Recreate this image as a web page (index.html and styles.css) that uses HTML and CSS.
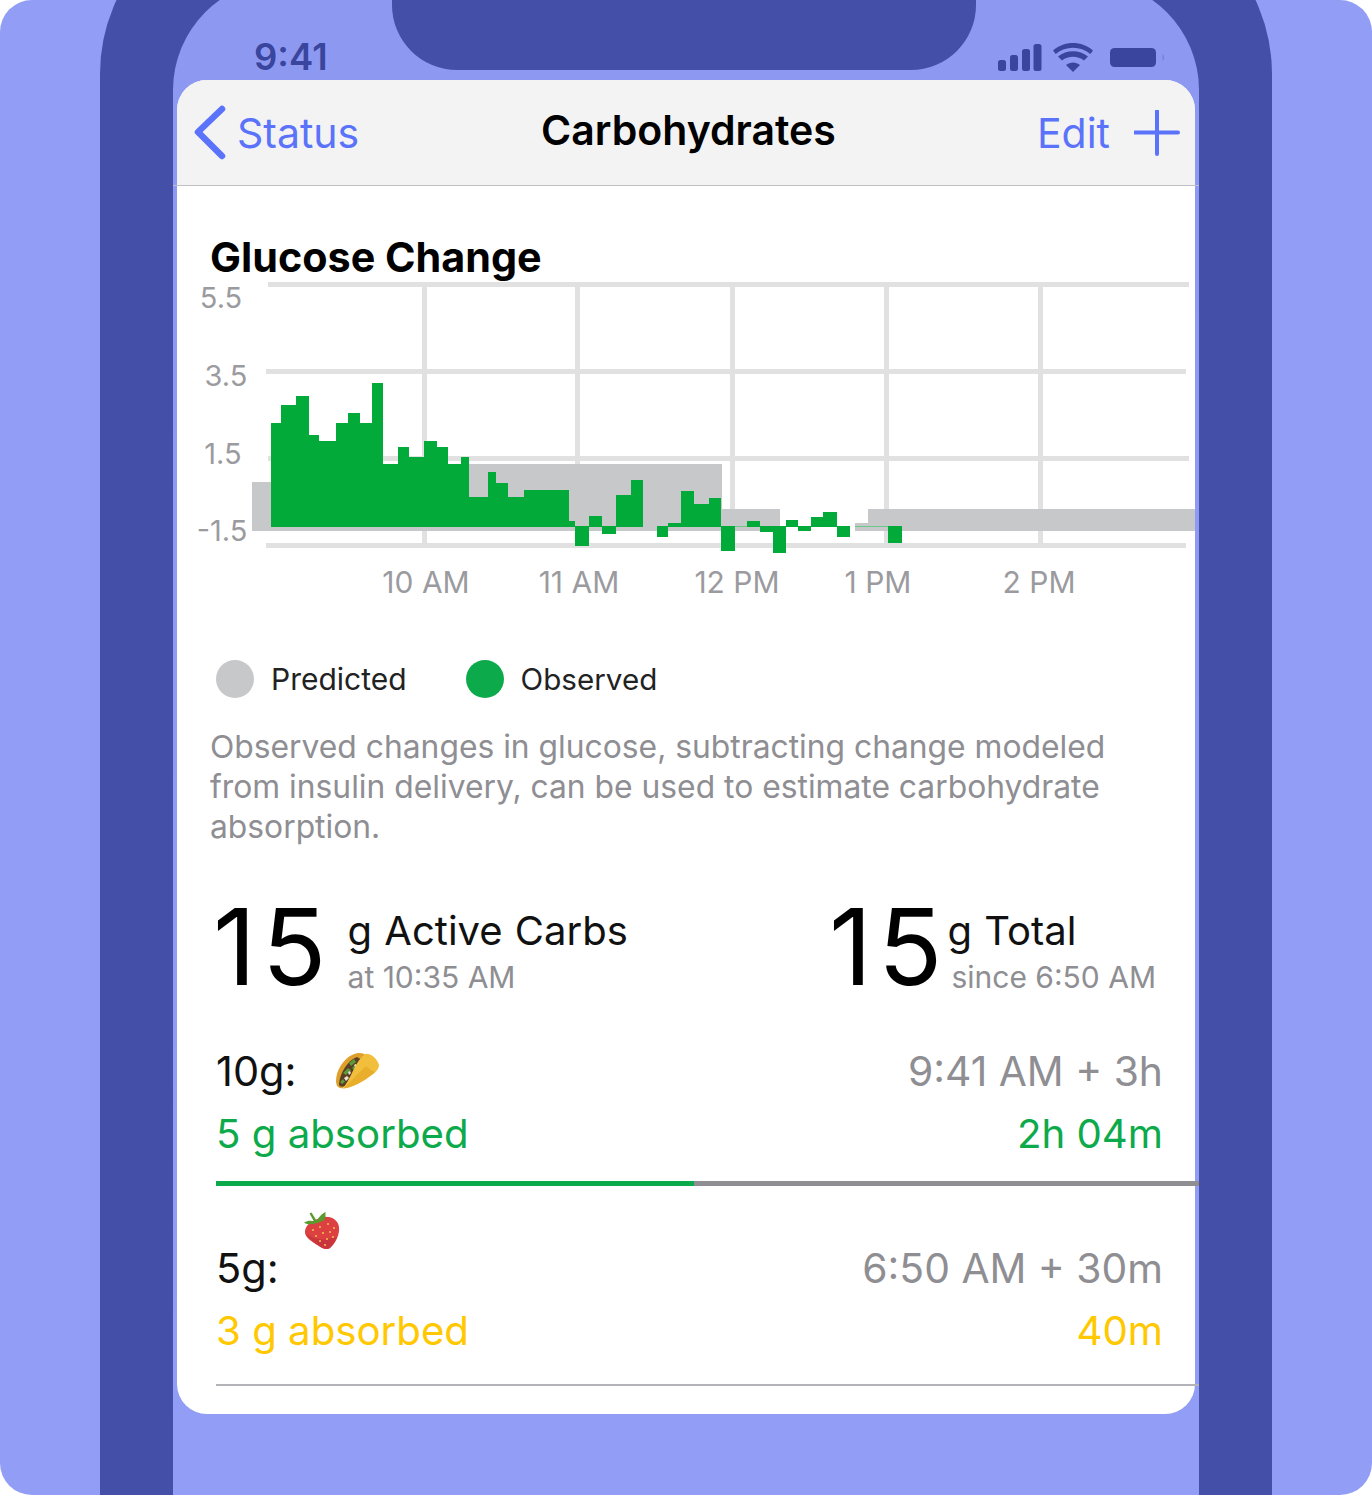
FILE: index.html
```html
<!DOCTYPE html>
<html lang="en">
<head>
<meta charset="utf-8">
<title>Carbohydrates</title>
<link rel="stylesheet" href="styles.css">
</head>
<body>
<div class="backdrop">
  <div class="frame">
    <div class="screen">
      <div class="statusbar">
        <span class="time">9:41</span>
        <div class="notch"></div>
        <div class="status-icons">
          <svg class="ic-signal" width="44" height="28" viewBox="0 0 44 28"><rect x="0" y="16" width="8" height="11" rx="2.5"/><rect x="12" y="11" width="8" height="16" rx="2.5"/><rect x="24" y="5" width="8" height="22" rx="2.5"/><rect x="35.500" y="0" width="8" height="27" rx="2.500"/></svg>
          <svg class="ic-wifi" width="40" height="30" viewBox="0 0 40 30"><path d="M20 29l-7-7c4-3.500 10-3.500 14 0z"/><path d="M9 17.500l-4-4c8.500-7 21.500-7 30 0l-4 4c-6.500-5-15.500-5-22 0z"/><path d="M2.700 11L0 7.500C11-2.500 29-2.500 40 7.500L37.300 11C27.500 2.500 12.500 2.500 2.700 11z"/></svg>
          <svg class="ic-battery" width="58" height="20" viewBox="0 0 58 20"><rect x="0" y="0" width="46" height="19" rx="4.500"/><path class="nub" d="M52.500 6c2 .8 2 6.200 0 7z"/></svg>
        </div>
      </div>
      <main class="card">
        <header class="nav">
          <a class="back">
            <svg width="34" height="56" viewBox="0 0 34 56"><path d="M29 4L5 27l24 24" fill="none" stroke="#5B73FA" stroke-width="6.500" stroke-linecap="round" stroke-linejoin="round"/></svg>
            <span>Status</span>
          </a>
          <h1 class="nav-title">Carbohydrates</h1>
          <div class="nav-actions">
            <span>Edit</span>
            <svg width="46" height="46" viewBox="0 0 46 46"><path d="M23 1v43M1 22.500h43" fill="none" stroke="#5B73FA" stroke-width="4" stroke-linecap="round"/></svg>
          </div>
        </header>
        <div class="nav-line"></div>

        <h2 class="chart-title">Glucose Change</h2>
        <svg class="chart" width="1018" height="330" viewBox="177 282 1018 330">
          <g class="grid">
            <rect x="268" y="282" width="921" height="5"/>
            <rect x="266" y="369" width="920" height="5"/>
            <rect x="268" y="456" width="921" height="5"/>
            <rect x="266" y="543" width="920" height="5"/>
            <rect x="422" y="284" width="5" height="261"/>
            <rect x="575" y="284" width="5" height="261"/>
            <rect x="730" y="284" width="5" height="261"/>
            <rect x="884" y="284" width="5" height="261"/>
            <rect x="1038" y="284" width="5" height="261"/>
          </g>
          <g class="predicted">
            <rect x="252" y="482" width="20" height="49"/>
            <rect x="271" y="520" width="200" height="11"/>
            <rect x="469" y="464" width="253" height="67"/>
            <rect x="722" y="509" width="58" height="22"/>
            <rect x="855" y="523" width="13" height="8"/>
            <rect x="868" y="509" width="327" height="22"/>
          </g>
          <path class="observed" d="M271 527V423H281V405H296V396H309V435H319V441H336V423H348V413H360V423H372V383H383V464H398V447H409V457H424V441H437V447H448V464H461V457H469V497H488V472H496V483H508V497H524V490H569V521H575V527H589V516H602V527H616V495H631V480H643V527H668V523H681V491H694V504H709V498H721V527Z"/>
          <g class="observed">
            <rect x="575" y="526" width="14" height="20"/>
            <rect x="602" y="526" width="14" height="8"/>
            <rect x="657" y="526" width="11" height="11"/>
            <rect x="721" y="526" width="14" height="25"/>
            <rect x="747" y="521" width="13" height="6"/>
            <rect x="760" y="526" width="13" height="6"/>
            <rect x="773" y="526" width="13" height="27"/>
            <rect x="786" y="520" width="12" height="7"/>
            <rect x="798" y="526" width="13" height="5"/>
            <rect x="811" y="517" width="12" height="10"/>
            <rect x="823" y="512" width="14" height="15"/>
            <rect x="837" y="526" width="13" height="11"/>
            <rect x="888" y="526" width="14" height="17"/>
          </g>
          <g class="thin">
            <rect x="735" y="526" width="12" height="1"/>
            <rect x="855" y="526" width="33" height="1"/>
          </g>
          <g class="y-axis">
            <text x="221" y="308" text-anchor="middle">5.5</text>
            <text x="226" y="386" text-anchor="middle">3.5</text>
            <text x="223" y="464" text-anchor="middle">1.5</text>
            <text x="222" y="541" text-anchor="middle">-1.5</text>
          </g>
          <g class="x-axis">
            <text x="426" y="593" text-anchor="middle">10 AM</text>
            <text x="579" y="593" text-anchor="middle">11 AM</text>
            <text x="737" y="593" text-anchor="middle">12 PM</text>
            <text x="878" y="593" text-anchor="middle">1 PM</text>
            <text x="1039" y="593" text-anchor="middle">2 PM</text>
          </g>
        </svg>

        <div class="legend">
          <div class="legend-item"><span class="dot dot-predicted"></span><span>Predicted</span></div>
          <div class="legend-item"><span class="dot dot-observed"></span><span class="legend-observed">Observed</span></div>
        </div>

        <p class="description">Observed changes in glucose, subtracting change modeled from insulin delivery, can be used to estimate carbohydrate absorption.</p>

        <section class="stats">
          <div class="stat">
            <span class="big">15</span>
            <div class="stat-text">
              <div class="stat-label">g Active Carbs</div>
              <div class="stat-sub">at 10:35 AM</div>
            </div>
          </div>
          <div class="stat stat-right">
            <span class="big">15</span>
            <div class="stat-text">
              <div class="stat-label">g Total</div>
              <div class="stat-sub stat-sub-in">since 6:50 AM</div>
            </div>
          </div>
        </section>

        <section class="entry entry-first">
          <div class="entry-row">
            <div class="food">
              <span class="amount">10g:</span>
              <svg class="taco" width="46" height="40" viewBox="0 0 46 40">
                <path d="M2 30C2 18 12 3 25 2c4 0 6 1 7 3L9 37c-4 1-7-2-7-7z" fill="#DFA02B"/>
                <path d="M5 33C6 22 13 10 23 6l5 3L11 35c-3 1-6 1-6-2z" fill="#5B3F24"/>
                <path d="M9 22l5-5 3 2-5 5zM15 12l5-4 2 3-5 4zM18 17l4-4 2 2-4 4zM6 31l3-3 2 3-3 2z" fill="#5C9A3A"/>
                <path d="M10 27l3-2 2 2-3 3zM14 21l2-1 1 2-2 2zM20 14l2-1 1 2-2 1z" fill="#E9E3D4"/>
                <path d="M9 37.500C18 26 20 12 31 3c5-1 12 4 14 11 0 4-3 7-6 9C30 30 18 37 9 37.500z" fill="#F1BF3C"/>
                <path d="M9 37.500C18 30 24 22 32 15c3 3 6 5 9 6-1 1-1 1-2 2C30 30 18 37 9 37.500z" fill="#E9AE2C"/>
              </svg>
            </div>
            <span class="when">9:41 AM + 3h</span>
          </div>
          <div class="entry-row entry-row-sub green">
            <span>5 g absorbed</span>
            <span>2h 04m</span>
          </div>
          <div class="progress"><div class="progress-fill" style="width:48.600%"></div></div>
        </section>

        <section class="entry entry-second">
          <div class="entry-row">
            <div class="food">
              <span class="amount">5g:</span>
              <svg class="berry" width="38" height="42" viewBox="0 0 38 42">
                <path d="M2 20C3 13 10 9 20 6c7-1 15 2 16 10 1 8-4 17-9 21-3 2-7 1-11-2C9 31 1 26 2 20z" fill="#DC4040"/>
                <path d="M16 35C11 31 5 27 3.500 23c7 6 19 7 30 3-2 5-4 8-6.500 11-3 2-7 1-11-2z" fill="#C9353C"/>
                <path d="M1 11.500c4-2 7-2 10-1L6.500 2.500l2-1 5 8c2-2 4-6 9-8.500 0 3 0 6-1 8-3 2-8 3-11 4-3 0-7 1-9.500-1.500z" fill="#5A9B2F"/>
                <g fill="#F2C14E">
                  <circle cx="10" cy="19" r="1"/><circle cx="17" cy="16" r="1"/><circle cx="25" cy="13" r="1"/><circle cx="31" cy="17" r="1"/>
                  <circle cx="13" cy="25" r="1"/><circle cx="20" cy="22" r="1"/><circle cx="27" cy="21" r="1"/>
                  <circle cx="17" cy="30" r="1"/><circle cx="24" cy="28" r="1"/><circle cx="30" cy="26" r="1"/><circle cx="22" cy="34" r="1"/>
                </g>
              </svg>
            </div>
            <span class="when">6:50 AM + 30m</span>
          </div>
          <div class="entry-row entry-row-sub yellow">
            <span>3 g absorbed</span>
            <span>40m</span>
          </div>
          <div class="hairline"></div>
        </section>
      </main>
    </div>
  </div>
</div>
</body>
</html>
```
FILE: styles.css
```css
* { box-sizing: border-box; }
html, body { margin: 0; padding: 0; background: #fff; }
body { font-family: Inter, "Noto Sans", sans-serif; }

.backdrop {
  width: 1372px;
  height: 1495px;
  border-radius: 32px;
  overflow: hidden;
  background: #929df5;
  padding: 0 100px;
}
.frame {
  height: 1595px;
  margin-top: -100px;
  padding: 80px 73px 0;
  background: #444fa7;
  border-radius: 174px 174px 0 0;
}
.screen {
  height: 100%;
  padding: 0 4px;
  background: linear-gradient(#8d99f1, #929df5);
  border-radius: 110px 110px 0 0;
}
.statusbar {
  height: 100px;
  display: flex;
  justify-content: space-between;
  position: relative;
}
.time {
  margin: 57px 0 0 77px;
  font-size: 36.500px;
  line-height: 40px;
  font-weight: 600;
  color: #3a459d;
}
.notch {
  position: absolute;
  left: 215px;
  top: 0;
  width: 584px;
  height: 90px;
  background: #444fa7;
  border-radius: 0 0 65px 65px;
}
.status-icons {
  display: flex;
  align-items: flex-start;
  padding: 64px 27px 0 0;
  gap: 11px;
  fill: #3a459d;
}
.ic-wifi { margin-top: -1px; }
.ic-battery { margin: 4px 0 0 6px; }
.nub { fill: #7781d8; }

.card {
  height: 1334px;
  background: #fff;
  border-radius: 30px;
}
.nav {
  height: 105px;
  background: #f3f3f3;
  border-radius: 30px 30px 0 0;
  display: flex;
  align-items: center;
  justify-content: space-between;
  padding: 0 15px 0 16px;
  position: relative;
  color: #5b73fa;
  font-size: 41px;
}
.back { display: flex; align-items: center; gap: 10px; }
.nav-title {
  position: absolute;
  left: 364px;
  top: 25px;
  margin: 0;
  font-size: 41px;
  line-height: 50px;
  font-weight: 600;
  color: #000;
}
.nav-actions { display: flex; align-items: center; gap: 24px; }
.nav-line { height: 1px; margin: 0 -4px; background: #c0c0c2; }

.chart-title {
  margin: 46px 0 0 33px;
  font-size: 41.300px;
  line-height: 50px;
  font-weight: 700;
  color: #000;
}
.chart { display: block; overflow: visible; }
.grid { fill: #e1e1e1; }
.predicted { fill: #c7c8ca; }
.observed { fill: #02aa39; }
.thin { fill: #6cc98a; }
.y-axis text { font-size: 29px; fill: #9b9b9f; }
.x-axis text { font-size: 30px; fill: #9b9b9f; }

.legend { display: flex; gap: 59px; margin: 48px 0 0 39px; font-size: 30px; color: #222; }
.legend-item { display: flex; align-items: center; gap: 17px; }
.legend-observed { font-size: 29.600px; }
.dot { width: 38px; height: 38px; border-radius: 50%; }
.dot-predicted { background: #c7c8ca; }
.dot-observed { background: #0daa4b; }

.description {
  margin: 29px 50px 0 33px;
  font-size: 31.800px;
  line-height: 40px;
  color: #8e8e93;
}

.stats { display: flex; justify-content: space-between; padding: 0 39px 0 36px; margin-top: 45px; }
.stat { display: flex; align-items: flex-start; gap: 15px; }
.stat-right { gap: 0; }
.big { font-size: 106px; line-height: 110px; font-weight: 400; letter-spacing: 6px; color: #000; }
.stat-right .big { margin-right: -1px; }
.stat-text { padding-top: 15px; }
.stat-label { font-size: 40px; line-height: 48px; color: #111; word-spacing: 1px; }
.stat-sub { font-size: 30px; line-height: 44px; color: #8e8e93; }
.stat-sub-in { margin-left: 4px; }

.entry { padding-left: 39px; }
.entry-first { margin-top: 38px; }
.entry-second { margin-top: 51px; }
.entry-row {
  display: flex;
  justify-content: space-between;
  align-items: center;
  padding-right: 32px;
  height: 62px;
  font-size: 40.800px;
}
.entry-row-sub { font-size: 40.200px; }
.food { display: flex; align-items: center; }
.amount { color: #111; font-size: 41.500px; }
.when { color: #8e8e93; }
.taco { margin: 0 0 0 38px; }
.berry { margin: -72px 0 0 24px; }
.green { color: #0daa4b; }
.yellow { color: #ffc800; }
.progress { height: 5px; margin: 17px -4px 0 0; background: #8e8e93; }
.progress-fill { height: 100%; background: #0daa4b; }
.hairline { height: 2px; margin: 23px -4px 0 0; background: #b4b4b8; }
```
